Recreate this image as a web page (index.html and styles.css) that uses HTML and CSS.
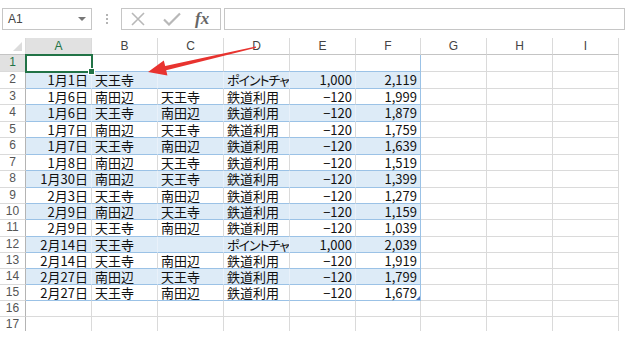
FILE: index.html
```html
<!DOCTYPE html>
<html lang="ja">
  <head>
    <meta charset="UTF-8">
    <title>交通費</title>
    <link rel="stylesheet" href="styles.css">
  </head>
  <body>
    <div class="toolbar">
      <div class="namebox"><span>A1</span><span class="drop"></span></div>
      <div class="dots"><i></i><i></i><i></i></div>
      <div class="fxbox">
        <svg class="cancel" width="16" height="16" viewBox="0 0 16 16"><path d="M2 2L14 14M14 2L2 14" stroke="#b8b8b8" stroke-width="1.6" fill="none"/></svg>
        <svg class="enter" width="18" height="14" viewBox="0 0 18 14"><path d="M1 7.5L6 12.5L17 1.5" stroke="#b8b8b8" stroke-width="2.2" fill="none"/></svg>
        <span class="fx">fx</span>
      </div>
      <div class="formula"></div>
    </div>

    <div class="sheet">
      <div class="row hd tall">
        <div class="corner"><span class="tri"></span></div>
        <div class="sel">A</div><div>B</div><div>C</div><div>D</div><div>E</div><div>F</div><div>G</div><div>H</div><div>I</div>
      </div>
      <div class="row tall">
        <div class="rn sel">1</div>
        <div class="c t active"></div><div class="c t"></div><div class="c t"></div><div class="c t"></div><div class="c t"></div><div class="c t f"></div>
        <div class="c"></div><div class="c"></div><div class="c"></div>
      </div>
      <div class="row tall band">
        <div class="rn">2</div>
        <div class="c t n">1月1日</div><div class="c t">天王寺</div><div class="c t"></div><div class="c t kana">ポイントチャージ</div><div class="c t n">1,000</div><div class="c t f n">2,119</div>
        <div class="c"></div><div class="c"></div><div class="c"></div>
      </div>
      <div class="row">
        <div class="rn">3</div>
        <div class="c t n">1月6日</div><div class="c t">南田辺</div><div class="c t">天王寺</div><div class="c t">鉄道利用</div><div class="c t n">−120</div><div class="c t f n">1,999</div>
        <div class="c"></div><div class="c"></div><div class="c"></div>
      </div>
      <div class="row tall band">
        <div class="rn">4</div>
        <div class="c t n">1月6日</div><div class="c t">天王寺</div><div class="c t">南田辺</div><div class="c t">鉄道利用</div><div class="c t n">−120</div><div class="c t f n">1,879</div>
        <div class="c"></div><div class="c"></div><div class="c"></div>
      </div>
      <div class="row">
        <div class="rn">5</div>
        <div class="c t n">1月7日</div><div class="c t">南田辺</div><div class="c t">天王寺</div><div class="c t">鉄道利用</div><div class="c t n">−120</div><div class="c t f n">1,759</div>
        <div class="c"></div><div class="c"></div><div class="c"></div>
      </div>
      <div class="row tall band">
        <div class="rn">6</div>
        <div class="c t n">1月7日</div><div class="c t">天王寺</div><div class="c t">南田辺</div><div class="c t">鉄道利用</div><div class="c t n">−120</div><div class="c t f n">1,639</div>
        <div class="c"></div><div class="c"></div><div class="c"></div>
      </div>
      <div class="row">
        <div class="rn">7</div>
        <div class="c t n">1月8日</div><div class="c t">南田辺</div><div class="c t">天王寺</div><div class="c t">鉄道利用</div><div class="c t n">−120</div><div class="c t f n">1,519</div>
        <div class="c"></div><div class="c"></div><div class="c"></div>
      </div>
      <div class="row tall band">
        <div class="rn">8</div>
        <div class="c t n">1月30日</div><div class="c t">南田辺</div><div class="c t">天王寺</div><div class="c t">鉄道利用</div><div class="c t n">−120</div><div class="c t f n">1,399</div>
        <div class="c"></div><div class="c"></div><div class="c"></div>
      </div>
      <div class="row">
        <div class="rn">9</div>
        <div class="c t n">2月3日</div><div class="c t">天王寺</div><div class="c t">南田辺</div><div class="c t">鉄道利用</div><div class="c t n">−120</div><div class="c t f n">1,279</div>
        <div class="c"></div><div class="c"></div><div class="c"></div>
      </div>
      <div class="row band">
        <div class="rn">10</div>
        <div class="c t n">2月9日</div><div class="c t">南田辺</div><div class="c t">天王寺</div><div class="c t">鉄道利用</div><div class="c t n">−120</div><div class="c t f n">1,159</div>
        <div class="c"></div><div class="c"></div><div class="c"></div>
      </div>
      <div class="row tall">
        <div class="rn">11</div>
        <div class="c t n">2月9日</div><div class="c t">天王寺</div><div class="c t">南田辺</div><div class="c t">鉄道利用</div><div class="c t n">−120</div><div class="c t f n">1,039</div>
        <div class="c"></div><div class="c"></div><div class="c"></div>
      </div>
      <div class="row band">
        <div class="rn">12</div>
        <div class="c t n">2月14日</div><div class="c t">天王寺</div><div class="c t"></div><div class="c t kana">ポイントチャージ</div><div class="c t n">1,000</div><div class="c t f n">2,039</div>
        <div class="c"></div><div class="c"></div><div class="c"></div>
      </div>
      <div class="row">
        <div class="rn">13</div>
        <div class="c t n">2月14日</div><div class="c t">天王寺</div><div class="c t">南田辺</div><div class="c t">鉄道利用</div><div class="c t n">−120</div><div class="c t f n">1,919</div>
        <div class="c"></div><div class="c"></div><div class="c"></div>
      </div>
      <div class="row band">
        <div class="rn">14</div>
        <div class="c t n">2月27日</div><div class="c t">南田辺</div><div class="c t">天王寺</div><div class="c t">鉄道利用</div><div class="c t n">−120</div><div class="c t f n">1,799</div>
        <div class="c"></div><div class="c"></div><div class="c"></div>
      </div>
      <div class="row">
        <div class="rn">15</div>
        <div class="c t n">2月27日</div><div class="c t">天王寺</div><div class="c t">南田辺</div><div class="c t">鉄道利用</div><div class="c t n">−120</div><div class="c t f n last">1,679</div>
        <div class="c"></div><div class="c"></div><div class="c"></div>
      </div>
      <div class="row">
        <div class="rn">16</div>
        <div class="c"></div><div class="c"></div><div class="c"></div><div class="c"></div><div class="c"></div><div class="c"></div>
        <div class="c"></div><div class="c"></div><div class="c"></div>
      </div>
      <div class="row cut">
        <div class="rn">17</div>
        <div class="c"></div><div class="c"></div><div class="c"></div><div class="c"></div><div class="c"></div><div class="c"></div>
        <div class="c"></div><div class="c"></div><div class="c"></div>
      </div>
    </div>

    <svg class="arrow" width="631" height="346" viewBox="0 0 631 346">
      <polygon points="148,72 167.4,75.6 166.2,70.2 256.2,47.8 255.8,46.4 165.2,66.1 163.8,60.4" fill="#e8332f"/>
    </svg>
  </body>
</html>
```

FILE: styles.css
```css
body {
  margin: 0;
  background: #fff;
  font-family: "Liberation Sans", Arial, sans-serif;
}

/* formula bar */
.toolbar {
  display: flex;
  height: 22px;
  padding: 8px 6px 0 2px;
  margin-bottom: 8px;
}

.namebox {
  width: 90px;
  box-sizing: border-box;
  border: 1px solid #c6c6c6;
  display: flex;
  align-items: center;
  justify-content: space-between;
  padding: 0 5px 0 5px;
  font-size: 12px;
  color: #444;
}

.drop {
  width: 0;
  height: 0;
  border-left: 4px solid transparent;
  border-right: 4px solid transparent;
  border-top: 4px solid #777;
}

.dots {
  width: 29px;
  display: flex;
  flex-direction: column;
  align-items: center;
  justify-content: center;
  gap: 2px;
}

.dots i {
  width: 2px;
  height: 2px;
  background: #b4b4b4;
}

.fxbox {
  width: 100px;
  box-sizing: border-box;
  border: 1px solid #c6c6c6;
  display: flex;
  align-items: center;
  padding-left: 8px;
}

.cancel {
  margin-right: 17px;
}

.enter {
  margin-right: 14px;
}

.fx {
  font-family: "Liberation Serif", serif;
  font-style: italic;
  font-weight: bold;
  font-size: 17px;
  color: #666;
  line-height: 20px;
}

.formula {
  flex: 1;
  margin-left: 3px;
  border: 1px solid #c6c6c6;
}

/* grid */
.sheet {
  width: 620px;
}

.row {
  display: grid;
  grid-template-columns: 26px repeat(5, 66px) 65px repeat(3, 66px);
  height: 16px;
}

.row.tall {
  height: 17px;
}

.row.cut {
  height: 14px;
}

.row > div {
  box-sizing: border-box;
  border-right: 1px solid #dadada;
  border-bottom: 1px solid #dadada;
  white-space: nowrap;
}

.row.cut > div {
  border-bottom: none;
}

.hd > div {
  font-size: 12px;
  color: #444;
  text-align: center;
  line-height: 16px;
  border-bottom-color: #c4c4c4;
}

.hd .sel {
  background: #e1e1e1;
  color: #217346;
}

.corner {
  display: flex;
  justify-content: flex-end;
  align-items: flex-end;
  padding: 0 3px 3px 0;
}

.tri {
  width: 0;
  height: 0;
  border-left: 9px solid transparent;
  border-bottom: 9px solid #dcdcdc;
}

.rn {
  font-size: 12px;
  color: #555;
  text-align: center;
  line-height: 15px;
  border-right-color: #b4b4b4 !important;
}

.row.cut .rn {
  line-height: 14px;
}

.rn.sel {
  background: #e1e1e1;
  color: #217346;
}

.c {
  font-family: "Noto Sans CJK JP", sans-serif;
  font-size: 13px;
  color: #111;
  line-height: 15px;
  padding: 0 3px;
}

.c.n {
  text-align: right;
  padding-right: 3px;
}

.kana {
  overflow: hidden;
  font-feature-settings: "palt";
  letter-spacing: -1px;
  padding-right: 0 !important;
}

/* table A1:F15 */
.c.t {
  border-bottom-color: #9bc2e6;
}

.band .c.t {
  background: #ddebf7;
  border-right-color: #e9f1fa;
}

.c.f {
  border-right-color: #9bc2e6 !important;
}

.last {
  position: relative;
}

.last::after {
  content: "";
  position: absolute;
  right: 0;
  bottom: 0;
  width: 0;
  height: 0;
  border-left: 4px solid transparent;
  border-bottom: 4px solid #4a74c2;
}

.active {
  position: relative;
  z-index: 2;
  outline: 2px solid #217346;
  outline-offset: -1px;
}

.active::after {
  content: "";
  position: absolute;
  right: -4px;
  bottom: -4px;
  width: 5px;
  height: 5px;
  background: #217346;
  border: 1px solid #fff;
}

.arrow {
  position: absolute;
  left: 0;
  top: 0;
  pointer-events: none;
}
```
